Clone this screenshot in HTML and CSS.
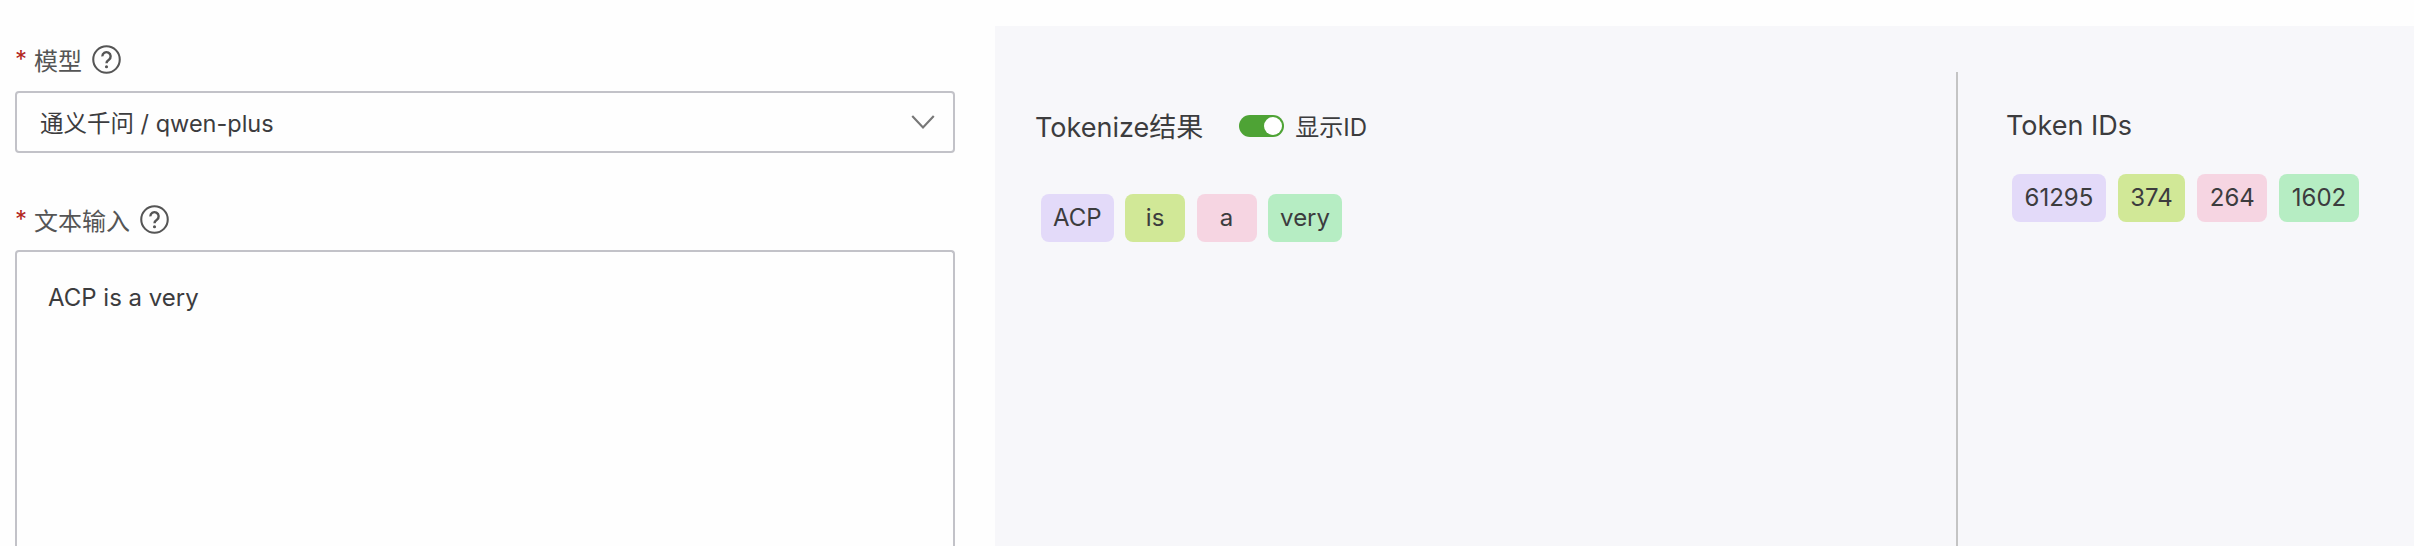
FILE: index.html
```html
<!DOCTYPE html>
<html lang="en">
<head>
    <meta charset="UTF-8">
    <title>Tokenize</title>
    <link rel="stylesheet" href="styles.css">
</head>
<body>

    <div class="form-col">
        <div class="field-label">
            <span class="req">*</span>
            <span>模型</span>
            <svg class="help" viewBox="0 0 28 28"><circle cx="14" cy="14" r="12.8" fill="none" stroke="#555" stroke-width="2"/><path d="M10 11a4 4 0 1 1 6.300 3.200c-1.500 1-2.300 1.700-2.300 3.300" fill="none" stroke="#555" stroke-width="2.300"/><circle cx="14" cy="21" r="1.500" fill="#555"/></svg>
        </div>
        <div class="select-box">
            <span class="select-value">通义千问 / qwen-plus</span>
            <svg class="chevron" viewBox="0 0 22 13"><path d="M1 1l10 10.500L21 1" fill="none" stroke="#777" stroke-width="2"/></svg>
        </div>

        <div class="field-label second">
            <span class="req">*</span>
            <span>文本输入</span>
            <svg class="help" viewBox="0 0 28 28"><circle cx="14" cy="14" r="12.8" fill="none" stroke="#555" stroke-width="2"/><path d="M10 11a4 4 0 1 1 6.300 3.200c-1.500 1-2.300 1.700-2.300 3.300" fill="none" stroke="#555" stroke-width="2.300"/><circle cx="14" cy="21" r="1.500" fill="#555"/></svg>
        </div>
        <div class="text-box">ACP is a very</div>
    </div>

    <div class="result-panel">
        <div class="tokens-col">
            <div class="panel-head">
                <span class="panel-title">Tokenize结果</span>
                <span class="switch"><span class="knob"></span></span>
                <span class="switch-label">显示ID</span>
            </div>
            <div class="pills">
                <span class="pill purple">ACP</span>
                <span class="pill lime">is</span>
                <span class="pill pink">a</span>
                <span class="pill green">very</span>
            </div>
        </div>
        <div class="ids-col">
            <div class="panel-head">
                <span class="panel-title">Token IDs</span>
            </div>
            <div class="pills">
                <span class="pill purple">61295</span>
                <span class="pill lime">374</span>
                <span class="pill pink">264</span>
                <span class="pill green">1602</span>
            </div>
        </div>
    </div>

</body>
</html>
```
FILE: styles.css
```css
html, body {
    margin: 0;
    height: 546px;
    overflow: hidden;
}

body {
    display: flex;
    background-color: #fefefe;
    color: #3c3c3e;
    font-family: Inter, "Noto Sans CJK SC", sans-serif;
    font-size: 24px;
}

.form-col {
    box-sizing: border-box;
    display: flex;
    flex-direction: column;
    width: 995px;
    padding: 45px 40px 0 15px;
}

.field-label {
    display: flex;
    align-items: center;
    flex: none;
    height: 28px;
    color: #555;
}

.field-label.second {
    margin-top: 52px;
}

.req {
    width: 19px;
    color: #b3261e;
}

.help {
    width: 29px;
    height: 29px;
    margin-left: 10px;
}

.select-box {
    box-sizing: border-box;
    display: flex;
    flex: none;
    align-items: center;
    justify-content: space-between;
    height: 62px;
    margin-top: 18px;
    padding: 0 18px 0 23px;
    border: 2px solid #c2c2c8;
    border-radius: 4px;
}

.select-value {
    font-size: 23.5px;
}

.chevron {
    width: 24px;
    height: 14px;
}

.text-box {
    box-sizing: border-box;
    flex: 1;
    margin-top: 17px;
    padding: 30px 31px 0;
    border: 2px solid #c2c2c8;
    border-bottom: none;
    border-radius: 4px 4px 0 0;
    line-height: 32px;
}

.result-panel {
    flex: 1;
    display: flex;
    margin-top: 26px;
    padding-top: 46px;
    background-color: #f7f7fa;
}

.tokens-col {
    box-sizing: border-box;
    width: 963px;
    padding: 33px 0 0 40px;
    border-right: 2px solid #c4c4c4;
}

.ids-col {
    flex: 1;
    padding: 33px 0 0 48px;
}

.panel-head {
    display: flex;
    align-items: center;
    height: 40px;
}

.panel-title {
    font-size: 27px;
}

.switch {
    display: flex;
    justify-content: flex-end;
    align-items: center;
    box-sizing: border-box;
    width: 45px;
    height: 22px;
    margin: 2px 0 0 36px;
    padding-right: 2px;
    border-radius: 11px;
    background-color: #4ea335;
}

.knob {
    width: 18px;
    height: 18px;
    border-radius: 50%;
    background-color: #fff;
}

.switch-label {
    margin-left: 11px;
}

.pills {
    display: flex;
    gap: 12px;
    margin: 29px 0 0 6px;
}

.tokens-col .pills {
    gap: 11.5px;
    margin: 49px 0 0 6px;
}

.pill {
    box-sizing: border-box;
    min-width: 60px;
    height: 48px;
    padding: 0 12px;
    border-radius: 8px;
    line-height: 48px;
    text-align: center;
}

.ids-col .pill {
    padding: 0 12.5px;
}

.purple { background-color: #e3daf9; }
.lime { background-color: #d1e897; }
.pink { background-color: #f6d5e2; }
.green { background-color: #b6edc3; }
```
